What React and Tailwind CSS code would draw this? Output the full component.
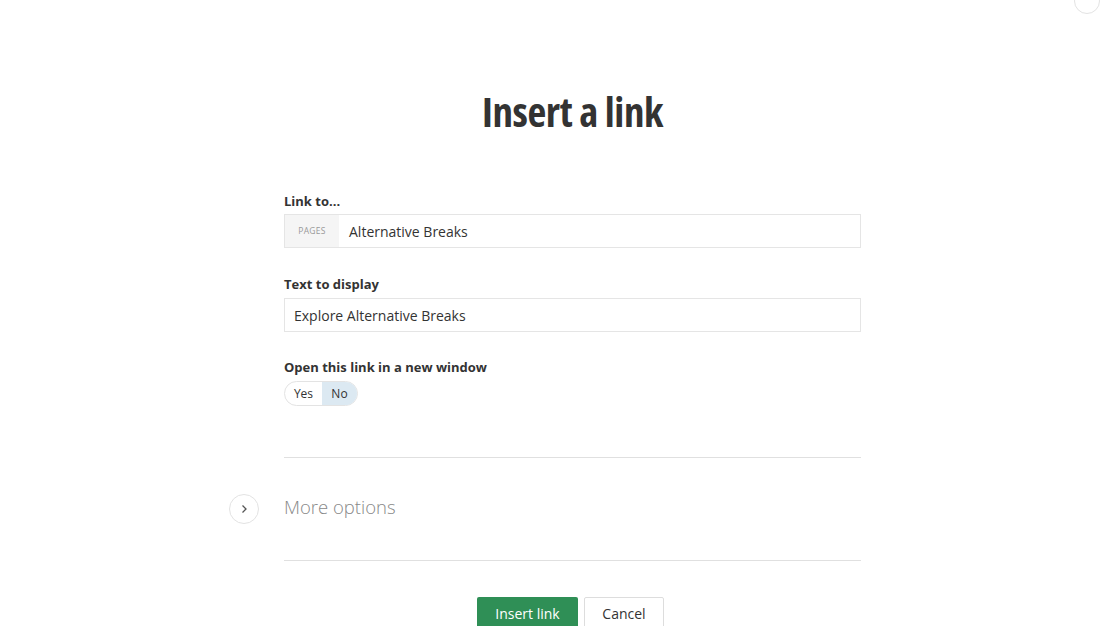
import React, { useState } from 'react';

const InsertLinkDialog = () => {
  const [newWindow, setNewWindow] = useState(false);

  return (
    <div
      className="relative w-[1120px] h-[626px] overflow-hidden bg-white text-[#333]"
      style={{ fontFamily: '"Open Sans", "Liberation Sans", sans-serif' }}
    >
      {/* botón cerrar (cortado arriba a la derecha) */}
      <div className="absolute right-[20px] top-[-12px] w-[26px] h-[26px] rounded-full border border-[#e3e3e3]" />

      <div className="flex justify-center pl-[25px]">
        <div className="w-[577px] flex flex-col">
          <h1 className="mt-[84px] text-center text-[41px] leading-[54px] font-bold font-stretch-condensed text-[#333] tracking-[-0.4px]">
            Insert a link
          </h1>

          {/* Link to */}
          <label className="mt-[54px] text-[13px] leading-[18px] font-bold">Link to...</label>
          <div className="mt-[4px] flex h-[34px] border border-[#e5e5e5]">
            <span className="w-[54px] bg-[#f5f5f5] flex items-center justify-center text-[8.5px] tracking-[0.3px] text-[#999] uppercase">
              Pages
            </span>
            <span className="flex items-center pl-[10px] text-[14px]">Alternative Breaks</span>
          </div>

          {/* Text to display */}
          <label className="mt-[27px] text-[13px] leading-[18px] font-bold">Text to display</label>
          <div className="mt-[5px] flex items-center h-[34px] border border-[#e5e5e5] pl-[9px] text-[14px]">
            Explore Alternative Breaks
          </div>

          {/* Nueva ventana */}
          <label className="mt-[26px] text-[13px] leading-[18px] font-bold">Open this link in a new window</label>
          <div className="mt-[5px] flex w-[74px] h-[25px] rounded-full border border-[#e3e3e3] overflow-hidden text-[12px]">
            <button
              onClick={() => setNewWindow(true)}
              className={`w-[37px] flex items-center justify-center ${newWindow ? 'bg-[#dce9f2]' : ''}`}
            >
              Yes
            </button>
            <button
              onClick={() => setNewWindow(false)}
              className={`flex-1 flex items-center justify-center ${!newWindow ? 'bg-[#dce9f2]' : ''}`}
            >
              No
            </button>
          </div>

          {/* Más opciones */}
          <div className="mt-[51px] border-t border-[#e0e0e0]" />
          <div className="relative flex items-center h-[102px]">
            <span className="absolute left-[-55px] top-[36px] w-[30px] h-[30px] rounded-full border border-[#e3e3e3] flex items-center justify-center">
              <svg width="10" height="10" viewBox="0 0 10 10" fill="none" stroke="#555" strokeWidth="1.3">
                <path d="M3.5 1.5 L7 5 L3.5 8.5" />
              </svg>
            </span>
            <span className="mb-[4px] text-[18.5px] font-light text-[#888]">More options</span>
          </div>
          <div className="border-t border-[#e0e0e0]" />

          {/* Acciones */}
          <div className="mt-[36px] flex justify-center gap-[6px] pr-[4px]">
            <button className="w-[101px] h-[32px] rounded-[2px] bg-[#2f8f56] text-white text-[14px]">
              Insert link
            </button>
            <button className="w-[80px] h-[32px] rounded-[2px] border border-[#ddd] bg-white text-[14px] text-[#333]">
              Cancel
            </button>
          </div>
        </div>
      </div>
    </div>
  );
};

export default InsertLinkDialog;
